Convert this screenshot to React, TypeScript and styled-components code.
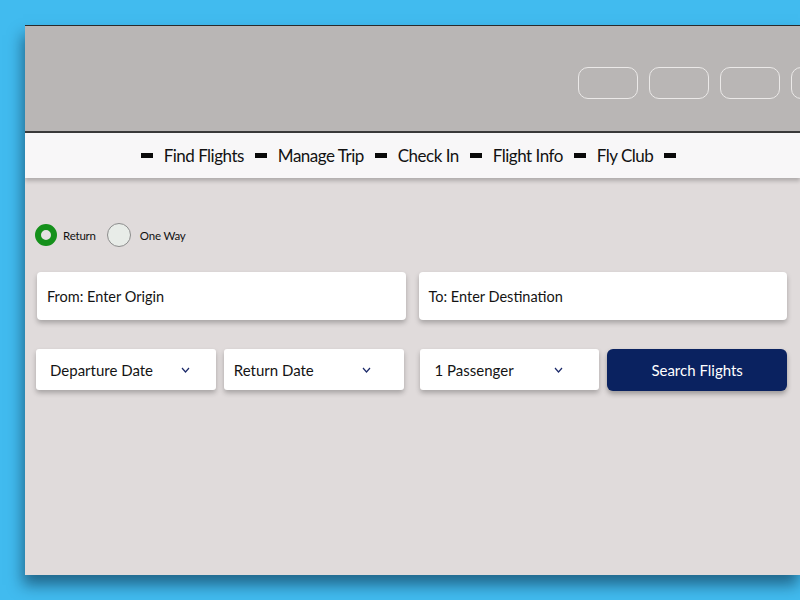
import React from "react";
import styled, { createGlobalStyle } from "styled-components";

const Global = createGlobalStyle`
  html, body { margin: 0; padding: 0; }
  body { background: #41bbef; font-family: Lato, "Open Sans", "Noto Sans", sans-serif; }
  * { box-sizing: border-box; }
`;

const Page = styled.div`
  width: 800px;
  height: 600px;
  overflow: hidden;
  padding: 25px 0 0 25px;
`;

const Window = styled.div`
  width: 775px;
  height: 550px;
  background: #e0dbdb;
  border-top: 1px solid #2a2a2a;
  box-shadow: -2px 10px 14px rgba(0, 20, 40, 0.5);
  display: flex;
  flex-direction: column;
  overflow: hidden;
`;

const Header = styled.header`
  height: 107px;
  flex-shrink: 0;
  background: #b9b6b5;
  border-bottom: 2px solid #3a3a3a;
  display: flex;
  align-items: flex-start;
  padding: 41px 0 0 553px;
  gap: 11px;
`;

const HeaderButton = styled.button`
  flex-shrink: 0;
  width: 60px;
  height: 32px;
  border: 1.5px solid #ebe9e8;
  border-radius: 10px;
  background: transparent;
  padding: 0;
`;

const Nav = styled.nav`
  height: 45px;
  flex-shrink: 0;
  background: #f8f7f8;
  box-shadow: 0 3px 4px rgba(0, 0, 0, 0.22);
  display: flex;
  align-items: center;
  justify-content: center;
  gap: 11px;
  padding-right: 8px;
  position: relative;
  z-index: 1;
`;

const Dash = styled.span`
  width: 12px;
  height: 5px;
  background: #0a0a0a;
  display: block;
`;

const NavLink = styled.span`
  font-size: 17px;
  color: #121212;
  letter-spacing: -0.5px;
`;

const Body = styled.main`
  flex: 1;
  padding: 45px 13px 0 11px;
  display: flex;
  flex-direction: column;
`;

const RadioRow = styled.div`
  display: flex;
  align-items: center;
  height: 24px;
`;

const RadioOption = styled.label<{ $gap: number }>`
  display: flex;
  align-items: center;
  gap: ${(p) => p.$gap}px;
  margin-right: 11px;
  font-size: 11.5px;
  letter-spacing: -0.2px;
  color: #111;
`;

const RadioOn = styled.span`
  width: 22px;
  height: 22px;
  border-radius: 50%;
  border: 6px solid #15901b;
  background: #e4e2e2;
  display: block;
  margin-left: -1px;
`;

const RadioOff = styled.span`
  width: 24px;
  height: 24px;
  border-radius: 50%;
  border: 1px solid #8c8c8c;
  background: #e8ece8;
  display: block;
`;

const FieldRow = styled.div`
  display: grid;
  grid-template-columns: 1fr 1fr;
  gap: 13px;
  margin-top: 25px;
  padding-left: 1px;
`;

const TextField = styled.div`
  height: 48px;
  background: #fff;
  border-radius: 4px;
  box-shadow: 0 3px 5px rgba(0, 0, 0, 0.25);
  display: flex;
  align-items: center;
  padding-left: 10px;
  font-size: 14.5px;
  color: #141414;
`;

const ControlRow = styled.div`
  display: grid;
  grid-template-columns: 1fr 1fr;
  gap: 16px;
  margin-top: 29px;
`;

const Group = styled.div`
  display: grid;
  grid-template-columns: 1fr 1fr;
  gap: 8px;
`;

const Select = styled.div<{ $pl: number; $pr: number }>`
  height: 41px;
  background: #fff;
  border-radius: 3px;
  box-shadow: 0 3px 5px rgba(0, 0, 0, 0.25);
  display: flex;
  align-items: center;
  justify-content: space-between;
  padding: 0 ${(p) => p.$pr}px 0 ${(p) => p.$pl}px;
  font-size: 15px;
  color: #141414;
`;

const SearchButton = styled.button`
  height: 42px;
  background: #0a2260;
  color: #fff;
  border: none;
  border-radius: 6px;
  box-shadow: 0 3px 5px rgba(0, 0, 0, 0.3);
  font-family: inherit;
  font-size: 15px;
`;

const Chevron = () => (
  <svg width="9" height="6" viewBox="0 0 9 6">
    <polyline points="1,1 4.5,5 8,1" fill="none" stroke="#1c2a6a" strokeWidth="1.2" />
  </svg>
);

const navItems = ["Find Flights", "Manage Trip", "Check In", "Flight Info", "Fly Club"];

export default function App() {
  return (
    <>
      <Global />
      <Page>
        <Window>
          <Header>
            <HeaderButton />
            <HeaderButton />
            <HeaderButton />
            <HeaderButton />
          </Header>
          <Nav>
            <Dash />
            {navItems.map((n) => (
              <React.Fragment key={n}>
                <NavLink>{n}</NavLink>
                <Dash />
              </React.Fragment>
            ))}
          </Nav>
          <Body>
            <RadioRow>
              <RadioOption $gap={6}>
                <RadioOn />
                Return
              </RadioOption>
              <RadioOption $gap={9}>
                <RadioOff />
                One Way
              </RadioOption>
            </RadioRow>
            <FieldRow>
              <TextField>From: Enter Origin</TextField>
              <TextField>To: Enter Destination</TextField>
            </FieldRow>
            <ControlRow>
              <Group>
                <Select $pl={14} $pr={26}>
                  Departure Date
                  <Chevron />
                </Select>
                <Select $pl={10} $pr={33}>
                  Return Date
                  <Chevron />
                </Select>
              </Group>
              <Group>
                <Select $pl={15} $pr={36}>
                  1 Passenger
                  <Chevron />
                </Select>
                <SearchButton>Search Flights</SearchButton>
              </Group>
            </ControlRow>
          </Body>
        </Window>
      </Page>
    </>
  );
}
